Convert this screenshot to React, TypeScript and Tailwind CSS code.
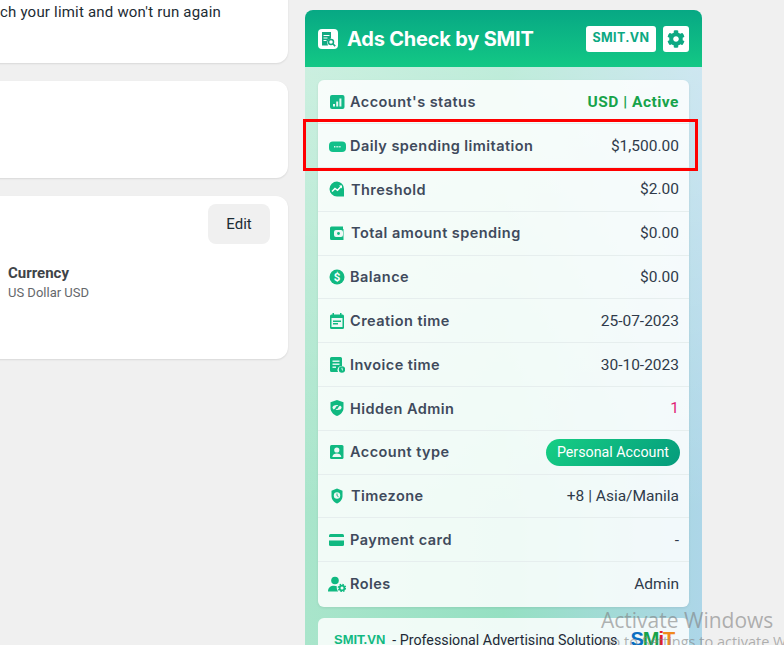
import type { ReactNode } from 'react'
import { FaCog } from 'react-icons/fa'

const green = '#10b981'

function Svg({ children, w = 16, h = 16 }: { children: ReactNode; w?: number; h?: number }) {
  return (
    <svg width={w} height={h} viewBox={`0 0 ${w} ${h}`} fill={green} className="shrink-0">
      {children}
    </svg>
  )
}

const StatusIcon = (
  <Svg>
    <rect x="1" y="1" width="14.500" height="14" rx="2" fill="#12b886" />
    <rect x="4" y="10" width="2" height="2.500" fill="#e8f8f2" />
    <rect x="7.200" y="7.500" width="2" height="5" fill="#e8f8f2" />
    <rect x="10.400" y="4.500" width="2" height="8" fill="#e8f8f2" />
  </Svg>
)

const DailyIcon = (
  <Svg w={17}>
    <rect x="0" y="3.500" width="17" height="10.500" rx="4" fill="#12c08a" />
    <path d="M5 8.700h7" stroke="#d8f5ea" strokeWidth="1.400" strokeDasharray="1 .6" />
  </Svg>
)

const ThresholdIcon = (
  <Svg>
    <path d="M8 .500a7.500 7.500 0 1 0 0 15h7V8A7.500 7.500 0 0 0 8 .500Z" />
    <path d="M3 10.500l3-3 2.500 1.800L12.500 5" fill="none" stroke="#fff" strokeWidth="1.500" />
    <path d="M10 4.500h3v3Z" fill="#fff" />
  </Svg>
)

const WalletIcon = (
  <Svg>
    <path d="M2.500 1.500H14V4h.5v11H2.500A1.500 1.500 0 0 1 1 13.500v-10.500A1.500 1.500 0 0 1 2.500 1.500Z" />
    <rect x="5" y="5" width="9" height="7" rx="2" fill="#eef8f5" />
    <circle cx="9.500" cy="8.500" r="1.400" fill={green} />
  </Svg>
)

const BalanceIcon = (
  <Svg>
    <circle cx="8" cy="8" r="7.500" />
    <text x="8" y="12.200" textAnchor="middle" fontSize="11.500" fontWeight="700" fill="#fff" fontFamily="Roboto, sans-serif">
      $
    </text>
  </Svg>
)

const CalendarIcon = (
  <Svg>
    <rect x="1" y="1.500" width="14" height="14.500" rx="1.500" />
    <rect x="3.500" y="0" width="1.500" height="3" />
    <rect x="11" y="0" width="1.500" height="3" />
    <rect x="2.500" y="5" width="11" height="9" fill="#eef8f5" />
    <rect x="4" y="7.500" width="8" height="1.500" />
    <rect x="4" y="10" width="5" height="1.500" />
  </Svg>
)

const InvoiceIcon = (
  <Svg>
    <path d="M2.500 0h9A1.500 1.500 0 0 1 13 1.500V9a4 4 0 0 0-4 6H2.500A1.500 1.500 0 0 1 1 13.500v-12A1.500 1.500 0 0 1 2.500 0Z" />
    <rect x="3.500" y="3.500" width="7" height="1.400" fill="#eef8f5" />
    <rect x="3.500" y="6.500" width="7" height="1.400" fill="#eef8f5" />
    <rect x="3.500" y="9.500" width="3.500" height="1.400" fill="#eef8f5" />
    <circle cx="13" cy="12.500" r="3.200" />
    <path d="M13 10.800v1.700l1 .8" fill="none" stroke="#fff" strokeWidth=".9" />
  </Svg>
)

const ShieldOffIcon = (
  <Svg>
    <path d="M8 0l6.500 2.300V8c0 3.800-3 6.700-6.500 8-3.500-1.300-6.500-4.200-6.500-8V2.300Z" />
    <ellipse cx="8" cy="7.500" rx="4.500" ry="2.500" fill="#eef8f5" />
    <circle cx="8" cy="7.500" r="1.200" />
    <path d="M4.500 11l7-7" stroke={green} strokeWidth="1.400" />
  </Svg>
)

const AccountIcon = (
  <Svg>
    <rect x="1" y="1" width="13.500" height="14" rx="1.500" />
    <circle cx="7.800" cy="6" r="2.600" fill="#eef8f5" />
    <path d="M3.300 13c.3-2.500 2.200-3.600 4.500-3.600s4.200 1.100 4.500 3.600Z" fill="#eef8f5" />
  </Svg>
)

const TimezoneIcon = (
  <Svg>
    <path d="M8 .500l5.500 2.200V8c0 3.500-2.300 6.200-5.500 7.500C4.800 14.200 2.500 11.500 2.500 8V2.700Z" />
    <circle cx="8" cy="7.500" r="3.200" fill="#eef8f5" />
    <path d="M8 5.500v2.200l1.500 1" fill="none" stroke={green} strokeWidth="1" />
  </Svg>
)

const CardIcon = (
  <Svg>
    <rect x="0" y="2" width="15" height="12" rx="1.500" />
    <rect x="0" y="5" width="15" height="3.500" fill="#eef8f5" />
  </Svg>
)

const RolesIcon = (
  <Svg w={18}>
    <circle cx="7" cy="4.500" r="3.800" />
    <path d="M0 15.500c0-3.800 2.500-5.800 6-5.800 1 0 2 .2 2.800.5-.3 1.800.2 3.800 1.400 5.300Z" />
    <circle cx="14" cy="12" r="2.400" fill="none" stroke={green} strokeWidth="1.800" />
    <circle cx="14" cy="12" r="3.700" fill="none" stroke={green} strokeWidth="1.200" strokeDasharray="1.500 1.400" />
  </Svg>
)

const rows: { icon: ReactNode; label: string; value: ReactNode; gap: string }[] = [
  {
    icon: StatusIcon,
    label: "Account's status",
    gap: 'gap-[5px]',
    value: <span className="font-bold text-[#16a34a] tracking-[0.5px]">USD | Active</span>,
  },
  { icon: DailyIcon, label: 'Daily spending limitation', value: '$1,500.00', gap: 'gap-[5px]' },
  { icon: ThresholdIcon, label: 'Threshold', value: '$2.00', gap: 'gap-[6px]' },
  { icon: WalletIcon, label: 'Total amount spending', value: '$0.00', gap: 'gap-[6px]' },
  { icon: BalanceIcon, label: 'Balance', value: '$0.00', gap: 'gap-[5px]' },
  { icon: CalendarIcon, label: 'Creation time', value: '25-07-2023', gap: 'gap-[5px]' },
  { icon: InvoiceIcon, label: 'Invoice time', value: '30-10-2023', gap: 'gap-[5px]' },
  {
    icon: ShieldOffIcon,
    label: 'Hidden Admin',
    value: <span className="text-[#e11d74]">1</span>,
    gap: 'gap-[5px]',
  },
  {
    icon: AccountIcon,
    label: 'Account type',
    gap: 'gap-[5px]',
    value: (
      <span className="-mr-[1px] flex h-[27px] items-center rounded-full bg-[linear-gradient(135deg,#16cf84,#059b7c)] px-[11px] text-[14.25px] text-white">
        Personal Account
      </span>
    ),
  },
  { icon: TimezoneIcon, label: 'Timezone', value: '+8 | Asia/Manila', gap: 'gap-[6px]' },
  { icon: CardIcon, label: 'Payment card', value: '-', gap: 'gap-[5px]' },
  { icon: RolesIcon, label: 'Roles', value: 'Admin', gap: 'gap-[5px]' },
]

function LeftColumn() {
  return (
    <div className="flex w-[288px] shrink-0 flex-col gap-[18px] font-['Roboto',sans-serif] text-[#1c2b33]">
      <div className="-ml-4 -mt-10 h-[103px] rounded-xl bg-white pt-[42px] text-[15px] leading-5 shadow-[0_1px_2px_rgba(0,0,0,0.1)]">
        <div className="-ml-[25px] whitespace-nowrap tracking-[0.2px]">
          <span className="inline-block w-[41px]" />
          ch your limit and won&apos;t run again
        </div>
      </div>
      <div className="-ml-4 h-[97px] rounded-xl bg-white shadow-[0_1px_2px_rgba(0,0,0,0.1)]" />
      <div className="-ml-4 flex h-[163px] flex-col rounded-xl bg-white pl-6 pr-[18px] pt-2 shadow-[0_1px_2px_rgba(0,0,0,0.1)]">
        <button className="h-10 w-[62px] self-end rounded-lg bg-[#f0f0f0] text-[15px]">Edit</button>
        <div className="mt-[20px] text-[15px] font-bold leading-[18px] text-[#3f4448]">Currency</div>
        <div className="mt-[2px] text-[13px] leading-[18px] text-[#65676b]">US Dollar USD</div>
      </div>
    </div>
  )
}

function HeaderIcon() {
  return (
    <svg width="20" height="20" viewBox="0 0 20 20" className="shrink-0">
      <rect width="20" height="20" rx="4" fill="#fff" />
      <path d="M4 3h9v6.500a4.500 4.500 0 0 0-3 7H4Z" fill="#12a981" />
      <rect x="5.500" y="6" width="6" height="1" fill="#fff" />
      <rect x="5.500" y="8.500" width="4" height="1" fill="#fff" />
      <rect x="5.500" y="11" width="3" height="1" fill="#fff" />
      <circle cx="13" cy="13" r="2.500" fill="none" stroke="#12a981" strokeWidth="1.500" />
      <path d="M15 15l2.200 2.200" stroke="#12a981" strokeWidth="1.700" />
    </svg>
  )
}

function SidePanel() {
  return (
    <div className="ml-[17px] mt-[10px] flex h-[700px] w-[397px] shrink-0 flex-col overflow-hidden rounded-t-lg font-['Inter',sans-serif]">
      <div className="flex h-[57px] shrink-0 items-center bg-[linear-gradient(to_bottom,#07a884,#13c885)] pl-[13px] pr-[13px]">
        <HeaderIcon />
        <span className="ml-[9px] text-[20px] font-bold tracking-[-0.2px] text-white">Ads Check by SMIT</span>
        <span className="ml-auto flex h-[26px] w-[70px] items-center justify-center rounded-[3px] bg-white text-[12.5px] font-bold tracking-[0.4px] text-[#0ca882]">
          SMIT.VN
        </span>
        <span className="ml-[7px] flex h-[26px] w-[26px] items-center justify-center rounded-[3px] bg-white text-[18px] text-[#0ca882]">
          <FaCog />
        </span>
      </div>
      <div className="flex-1 bg-[linear-gradient(to_bottom,rgba(255,255,255,0.4),rgba(255,255,255,0)_70%),linear-gradient(to_right,#a9e5cb,#95e0c2_50%,#add6e8)] px-[13px] pt-[13px]">
        <div className="flex h-[527px] flex-col rounded-md bg-white/85 pt-[0.5px] shadow-[0_1px_3px_rgba(0,0,0,0.08)]">
          {rows.map((r, i) => (
            <div
              key={r.label}
              className={`flex h-[43.8px] shrink-0 items-center justify-between pl-[11px] pr-[10px] text-[15.5px] text-[#2f3a4a] ${
                i < rows.length - 1 ? 'border-b border-[#e6eeee]' : ''
              }`}
            >
              <span className={`flex items-center ${r.gap}`}>
                <span className="flex w-4 shrink-0 justify-center">{r.icon}</span>
                <span className="text-[14.5px] font-semibold tracking-[0.45px] text-[#3f4a5c]">{r.label}</span>
              </span>
              <span className="pt-[1px] font-['Roboto',sans-serif]">{r.value}</span>
            </div>
          ))}
        </div>
        <div className="mt-[11px] flex h-[60px] items-start rounded-md bg-white/85 pl-4 pt-[14px] text-[14px] leading-4 text-[#1f2937]">
          <span className="font-['Liberation_Sans',sans-serif] text-[13px] font-bold text-[#10b981]">SMIT.VN</span>
          <span className="ml-[7px] font-['Roboto',sans-serif] text-[14.25px]">- Professional Advertising Solutions</span>
          <span className="ml-[13px] -mt-[1px] font-['Liberation_Sans',sans-serif] text-[20px] font-bold leading-4 tracking-[-1px]">
            <span className="text-[#0a6fc2]">S</span>
            <span className="text-[#16a34a]">M</span>
            <span className="text-[#e11d2e]">i</span>
            <span className="text-[#f08a1d]">T</span>
          </span>
        </div>
      </div>
    </div>
  )
}

export default function App() {
  return (
    <div className="relative flex h-[645px] w-[784px] items-start overflow-hidden bg-[#f0f0f0]">
      <LeftColumn />
      <SidePanel />
      {/* annotation drawn over the screenshot */}
      <div className="absolute left-[303px] top-[119px] h-[52px] w-[395px] border-[3px] border-[#ff0000]" />
      {/* windows watermark */}
      <div className="pointer-events-none absolute left-[601px] top-[606px] whitespace-nowrap font-['Open_Sans',sans-serif] text-[#80808099]">
        <div className="text-[21px] leading-7">Activate Windows</div>
        <div className="text-[14.5px] leading-4">Go to Settings to activate Windows.</div>
      </div>
    </div>
  )
}
